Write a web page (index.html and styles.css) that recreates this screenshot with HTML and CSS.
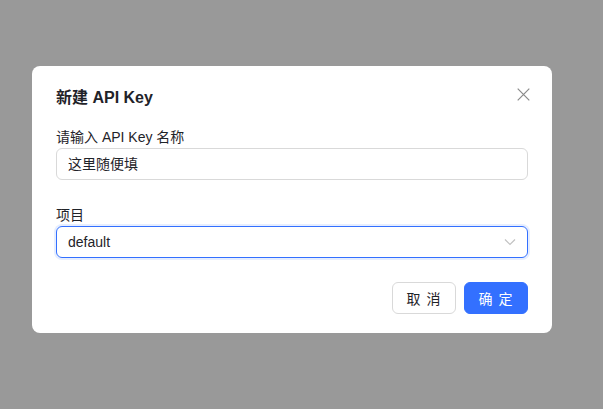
FILE: index.html
```html
<!DOCTYPE html>
<html lang="zh">
<head>
<meta charset="utf-8">
<link rel="stylesheet" href="styles.css">
</head>
<body>
<div class="modal">
  <div class="header">
    <div class="title">新建 API Key</div>
    <button class="close" aria-label="close">
      <svg width="13" height="13" viewBox="0 0 13 13"><path d="M0.7 0.7 L12.3 12.3 M12.3 0.7 L0.7 12.3" stroke="#8a8a8a" stroke-width="1.2" fill="none"/></svg>
    </button>
  </div>
  <div class="item">
    <label class="label">请输入 API Key 名称</label>
    <div class="input">这里随便填</div>
  </div>
  <div class="item">
    <label class="label">项目</label>
    <div class="input select">
      <span>default</span>
      <svg width="12" height="8" viewBox="0 0 12 8"><path d="M1 1.5 L6 6.5 L11 1.5" stroke="#c2c2c2" stroke-width="1.2" fill="none"/></svg>
    </div>
  </div>
  <div class="footer">
    <button class="btn">取 消</button>
    <button class="btn primary">确 定</button>
  </div>
</div>
</body>
</html>
```
FILE: styles.css
```css
html, body { margin: 0; padding: 0; }
body {
  background: #999999;
  width: 603px;
  height: 409px;
  overflow: hidden;
  font-family: "Liberation Sans", "Noto Sans CJK SC", sans-serif;
  color: #1f2329;
}
.modal {
  box-sizing: border-box;
  margin: 66px 0 0 32px;
  width: 520px;
  height: 267px;
  background: #fff;
  border-radius: 8px;
  padding: 20px 24px 19px;
  display: flex;
  flex-direction: column;
}
.header {
  display: flex;
  justify-content: space-between;
  align-items: flex-start;
  height: 24px;
  margin-bottom: 16px;
}
.title {
  font-size: 16px;
  font-weight: bold;
  line-height: 24px;
  color: #1f2329;
}
.close {
  border: 0;
  background: none;
  padding: 0;
  width: 13px;
  height: 13px;
  margin: 2px -2px 0 0;
  display: flex;
}
.item { display: flex; flex-direction: column; margin-bottom: 24px; }
.label {
  font-size: 14px;
  line-height: 22px;
  color: #1f2329;
}
.input {
  box-sizing: border-box;
  height: 32px;
  border: 1px solid #d9d9d9;
  border-radius: 6px;
  padding: 0 11px;
  font-size: 14px;
  line-height: 30px;
  color: #1f2329;
  display: flex;
  align-items: center;
  justify-content: space-between;
}
.select {
  border-color: #3370ff;
  box-shadow: 0 0 0 2px rgba(51, 112, 255, 0.12);
}
.footer {
  display: flex;
  justify-content: flex-end;
  gap: 8px;
}
.btn {
  box-sizing: border-box;
  width: 64px;
  height: 32px;
  border: 1px solid #d9d9d9;
  border-radius: 6px;
  background: #fff;
  font-family: inherit;
  font-size: 14px;
  letter-spacing: 1px;
  color: #1f2329;
  padding: 0;
}
.primary {
  background: #3370ff;
  border-color: #3370ff;
  color: #fff;
}
```
